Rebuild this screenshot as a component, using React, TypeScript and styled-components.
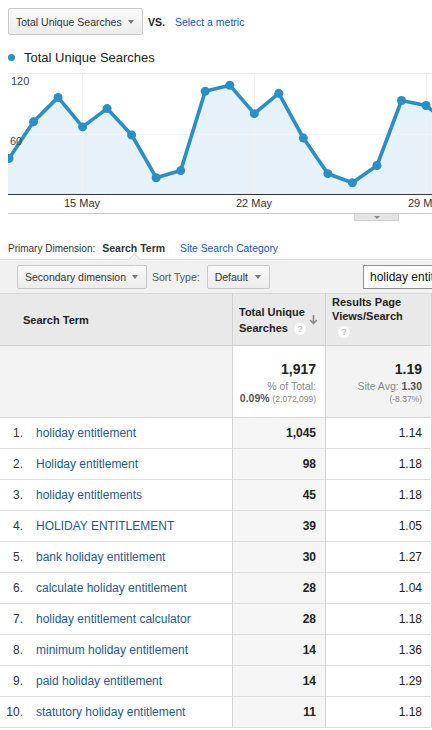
import React from "react";
import styled, { createGlobalStyle } from "styled-components";

const GlobalStyle = createGlobalStyle`
  html, body { margin: 0; padding: 0; background: #fff; }
  body { font-family: "Liberation Sans", Arial, sans-serif; color: #222; }
`;

const LINE = "#2a8fc7";
const LINK = "#1155cc";
const TERM = "#1d5a94";

const Page = styled.div`
  width: 432px;
  height: 730px;
  overflow: hidden;
`;

const TopBar = styled.div`
  display: flex;
  align-items: center;
  padding: 8px 0 0 8px;
  font-size: 10.5px;
`;

const Caret = styled.span`
  display: inline-block;
  flex: none;
  width: 0;
  height: 0;
  border-left: 3.5px solid transparent;
  border-right: 3.5px solid transparent;
  border-top: 4px solid #777;
`;

const DropButton = styled.div<{ $w: number }>`
  box-sizing: border-box;
  display: flex;
  align-items: center;
  justify-content: space-between;
  width: ${(p) => p.$w}px;
  height: 27px;
  padding: 0 8px 0 7px;
  border: 1px solid #c8c8c8;
  border-radius: 2px;
  background: linear-gradient(#fafafa, #ececec);
  font-size: 10.5px;
  color: #333;
  white-space: nowrap;
`;

const SmallButton = styled(DropButton)`
  height: 24px;
`;

const Vs = styled.span`
  font-weight: bold;
  margin-left: 5px;
`;

const Link = styled.span`
  color: ${LINK};
`;

const MetricLink = styled(Link)`
  margin-left: 10px;
`;

const Legend = styled.div`
  display: flex;
  align-items: center;
  gap: 9px;
  margin: 14px 0 0 8px;
  height: 16px;
  font-size: 13px;
  color: #222;
`;

const Dot = styled.span`
  width: 7px;
  height: 7px;
  border-radius: 50%;
  background: ${LINE};
`;

const ChartWrap = styled.div`
  margin: 8px 0 0 8px;
  border-bottom: 1px solid #c9c9c9;
  height: 140px;
`;

const DrawerRow = styled.div`
  display: flex;
  padding-left: 354px;
`;

const DrawerTab = styled.div`
  box-sizing: border-box;
  width: 45px;
  height: 7px;
  background: #e4e4e4;
  border: 1px solid #d0d0d0;
  border-top: none;
  display: flex;
  justify-content: center;
  align-items: center;
`;

const TinyCaret = styled(Caret)`
  border-left-width: 3px;
  border-right-width: 3px;
  border-top-width: 3px;
  border-top-color: #888;
`;

const DimRow = styled.div`
  display: flex;
  align-items: center;
  margin: 20px 0 0 8px;
  height: 14px;
  font-size: 10px;
  color: #333;
  white-space: nowrap;
`;

const DimActive = styled.span`
  font-weight: bold;
  margin-left: 7px;
  font-size: 10.5px;
  color: #333;
`;

const DimLink = styled(Link)`
  margin-left: 15px;
  font-size: 10.3px;
`;

const Toolbar = styled.div`
  position: relative;
  box-sizing: border-box;
  display: flex;
  align-items: center;
  height: 34px;
  margin-top: 4px;
  padding-left: 17px;
  background: #f1f1f1;
  border-top: 1px solid #dcdcdc;
  font-size: 10.5px;
  color: #555;
  &::before {
    content: "";
    position: absolute;
    top: -5px;
    left: 130px;
    width: 8px;
    height: 8px;
    background: #f1f1f1;
    border-left: 1px solid #dcdcdc;
    border-top: 1px solid #dcdcdc;
    transform: rotate(45deg);
  }
`;

const SortLabel = styled.span`
  margin: 0 7px 0 5px;
`;

const SearchBox = styled.div`
  box-sizing: border-box;
  margin-left: auto;
  margin-right: -20px;
  width: 89px;
  height: 24px;
  border: 1px solid #8e8e8e;
  background: #fff;
  padding: 0 0 0 6px;
  display: flex;
  align-items: center;
  font-size: 12px;
  color: #111;
  white-space: nowrap;
  overflow: hidden;
`;

const Table = styled.table`
  border-collapse: collapse;
  table-layout: fixed;
  width: 520px;
  font-size: 12px;
`;

const HeadCell = styled.th<{ $w: number }>`
  width: ${(p) => p.$w}px;
  height: 51px;
  background: #e9e9e9;
  border-right: 1px solid #cfcfcf;
  border-bottom: 1px solid #cfcfcf;
  border-top: 1px solid #d6d6d6;
  font-size: 11px;
  font-weight: bold;
  color: #222;
  text-align: left;
  vertical-align: middle;
  padding: 0;
`;

const TermHead = styled.div`
  padding-left: 23px;
`;

const MetricHead = styled.div`
  display: flex;
  align-items: center;
  padding: 0 6px;
  line-height: 16px;
`;

const MetricHeadTop = styled.div`
  padding: 0 6px;
  line-height: 14px;
  margin-top: -6px;
`;

const Help = styled.span`
  display: inline-flex;
  align-items: center;
  justify-content: center;
  width: 12px;
  height: 12px;
  border-radius: 50%;
  background: #fff;
  color: #c4c4c4;
  font-size: 9px;
  font-weight: bold;
  vertical-align: middle;
  margin-left: 6px;
`;

const HelpBlock = styled(Help)`
  display: flex;
  margin: 3px 0 0 6px;
`;

const SortArrow = styled.span`
  margin-left: auto;
  margin-right: 1px;
  color: #888;
  display: flex;
`;

const TotalCell = styled.td<{ $bg: string }>`
  height: 71px;
  background: ${(p) => p.$bg};
  border-right: 1px solid #d6d6d6;
  border-bottom: 1px solid #d6d6d6;
  text-align: right;
  vertical-align: top;
  padding: 0 9px 0 0;
`;

const TotalValue = styled.div`
  margin-top: 15px;
  font-size: 14px;
  font-weight: bold;
  color: #222;
  line-height: 16px;
`;

const TotalNote = styled.div`
  margin-top: 3px;
  font-size: 10.5px;
  line-height: 12px;
  color: #888;
  white-space: nowrap;
`;

const Strong = styled.b`
  color: #555;
`;

const Tiny = styled.span`
  font-size: 8.5px;
  color: #888;
`;

const Cell = styled.td<{ $bg?: string; $bold?: boolean }>`
  height: 30px;
  padding: 0 9px 0 0;
  background: ${(p) => p.$bg || "#fff"};
  border-right: 1px solid #d4d4d4;
  border-bottom: 1px solid #dedede;
  text-align: right;
  font-weight: ${(p) => (p.$bold ? "bold" : "normal")};
  color: #222;
`;

const TermCell = styled.td`
  height: 30px;
  padding: 0;
  border-right: 1px solid #d4d4d4;
  border-bottom: 1px solid #dedede;
`;

const TermWrap = styled.div`
  display: flex;
  align-items: center;
`;

const Index = styled.span`
  width: 23px;
  text-align: right;
  color: #333;
  margin-right: 13px;
`;

const Term = styled.span`
  color: ${TERM};
`;

const values = [35, 71, 95, 66, 84, 58, 16, 23, 101, 107, 79, 99, 55, 20, 11, 28, 92, 87, 68];

function Chart() {
  const w = 424;
  const axis = 121;
  const pts = values.map((v, i) => [1 + i * 24.53, axis - (v * 61) / 60]);
  const line = pts.map((p, i) => `${i ? "L" : "M"}${p[0].toFixed(1)},${p[1].toFixed(1)}`).join(" ");
  const area = `M0,${axis} L0,${pts[0][1]} ${line.replace(/^M/, "L")} L${w + 30},${axis} Z`;
  const weeks = [
    { x: 74, label: "15 May" },
    { x: 246, label: "22 May" },
    { x: 418, label: "29 May" },
  ];
  return (
    <svg width={w} height={140} style={{ display: "block", overflow: "hidden" }}>
      <defs>
        <clipPath id="plot">
          <rect x={0} y={0} width={w} height={140} />
        </clipPath>
      </defs>
      <g clipPath="url(#plot)">
        <line x1={0} x2={w} y1={0.5} y2={0.5} stroke="#ececec" />
        <path d={area} fill="#e7f1f9" />
        <line x1={0} x2={w} y1={61.5} y2={61.5} stroke="#f4f4f4" />
        {weeks.map((wk) => (
          <line key={wk.x} x1={wk.x + 0.5} x2={wk.x + 0.5} y1={0} y2={axis} stroke="#f2f2f2" />
        ))}
        <path d={line} fill="none" stroke={LINE} strokeWidth={3.6} strokeLinejoin="round" />
        {pts.map((p, i) => (
          <circle key={i} cx={p[0]} cy={p[1]} r={4.5} fill={LINE} />
        ))}
        <line x1={0} x2={w} y1={axis + 0.5} y2={axis + 0.5} stroke="#333" />
        <text x={3} y={12} fontSize={11} fill="#444" fontFamily="Liberation Sans, Arial, sans-serif">120</text>
        <text x={2} y={72} fontSize={11} fill="#444" fontFamily="Liberation Sans, Arial, sans-serif">60</text>
        {weeks.map((wk) => (
          <text key={wk.label} x={wk.x} y={134} fontSize={11} fill="#333" textAnchor="middle" fontFamily="Liberation Sans, Arial, sans-serif">
            {wk.label}
          </text>
        ))}
      </g>
    </svg>
  );
}

const rows: [string, string, string][] = [
  ["holiday entitlement", "1,045", "1.14"],
  ["Holiday entitlement", "98", "1.18"],
  ["holiday entitlements", "45", "1.18"],
  ["HOLIDAY ENTITLEMENT", "39", "1.05"],
  ["bank holiday entitlement", "30", "1.27"],
  ["calculate holiday entitlement", "28", "1.04"],
  ["holiday entitlement calculator", "28", "1.18"],
  ["minimum holiday entitlement", "14", "1.36"],
  ["paid holiday entitlement", "14", "1.29"],
  ["statutory holiday entitlement", "11", "1.18"],
];

export default function App() {
  return (
    <Page>
      <GlobalStyle />
      <TopBar>
        <DropButton $w={135}>
          Total Unique Searches <Caret />
        </DropButton>
        <Vs>VS.</Vs>
        <MetricLink>Select a metric</MetricLink>
      </TopBar>
      <Legend>
        <Dot />
        Total Unique Searches
      </Legend>
      <ChartWrap>
        <Chart />
      </ChartWrap>
      <DrawerRow>
        <DrawerTab>
          <TinyCaret />
        </DrawerTab>
      </DrawerRow>
      <DimRow>
        Primary Dimension:
        <DimActive>Search Term</DimActive>
        <DimLink>Site Search Category</DimLink>
      </DimRow>
      <Toolbar>
        <SmallButton $w={130}>
          Secondary dimension <Caret />
        </SmallButton>
        <SortLabel>Sort Type:</SortLabel>
        <SmallButton $w={63}>
          Default <Caret />
        </SmallButton>
        <SearchBox>holiday entitlement</SearchBox>
      </Toolbar>
      <Table>
        <thead>
          <tr>
            <HeadCell $w={232}>
              <TermHead>Search Term</TermHead>
            </HeadCell>
            <HeadCell $w={92}>
              <MetricHead>
                <div>
                  Total Unique
                  <br />
                  Searches<Help>?</Help>
                </div>
                <SortArrow>
                  <svg width="9" height="11" viewBox="0 0 9 11">
                    <path d="M4.5 1 V9 M1.2 6 L4.5 9.5 L7.8 6" stroke="#8a8a8a" strokeWidth="1.6" fill="none" />
                  </svg>
                </SortArrow>
              </MetricHead>
            </HeadCell>
            <HeadCell $w={105}>
              <MetricHeadTop>
                Results Page
                <br />
                Views/Search
                <HelpBlock>?</HelpBlock>
              </MetricHeadTop>
            </HeadCell>
            <HeadCell $w={91} />
          </tr>
        </thead>
        <tbody>
          <tr>
            <TotalCell $bg="#f3f3f3" />
            <TotalCell $bg="#ffffff">
              <TotalValue>1,917</TotalValue>
              <TotalNote>
                % of Total:
                <br />
                <Strong>0.09%</Strong> <Tiny>(2,072,099)</Tiny>
              </TotalNote>
            </TotalCell>
            <TotalCell $bg="#f3f3f3">
              <TotalValue>1.19</TotalValue>
              <TotalNote>
                Site Avg: <Strong>1.30</Strong>
                <br />
                <Tiny>(-8.37%)</Tiny>
              </TotalNote>
            </TotalCell>
            <TotalCell $bg="#f3f3f3" />
          </tr>
          {rows.map(([term, total, views], i) => (
            <tr key={i}>
              <TermCell>
                <TermWrap>
                  <Index>{i + 1}.</Index>
                  <Term>{term}</Term>
                </TermWrap>
              </TermCell>
              <Cell $bg="#f5f5f5" $bold>
                {total}
              </Cell>
              <Cell>{views}</Cell>
              <Cell />
            </tr>
          ))}
        </tbody>
      </Table>
    </Page>
  );
}
